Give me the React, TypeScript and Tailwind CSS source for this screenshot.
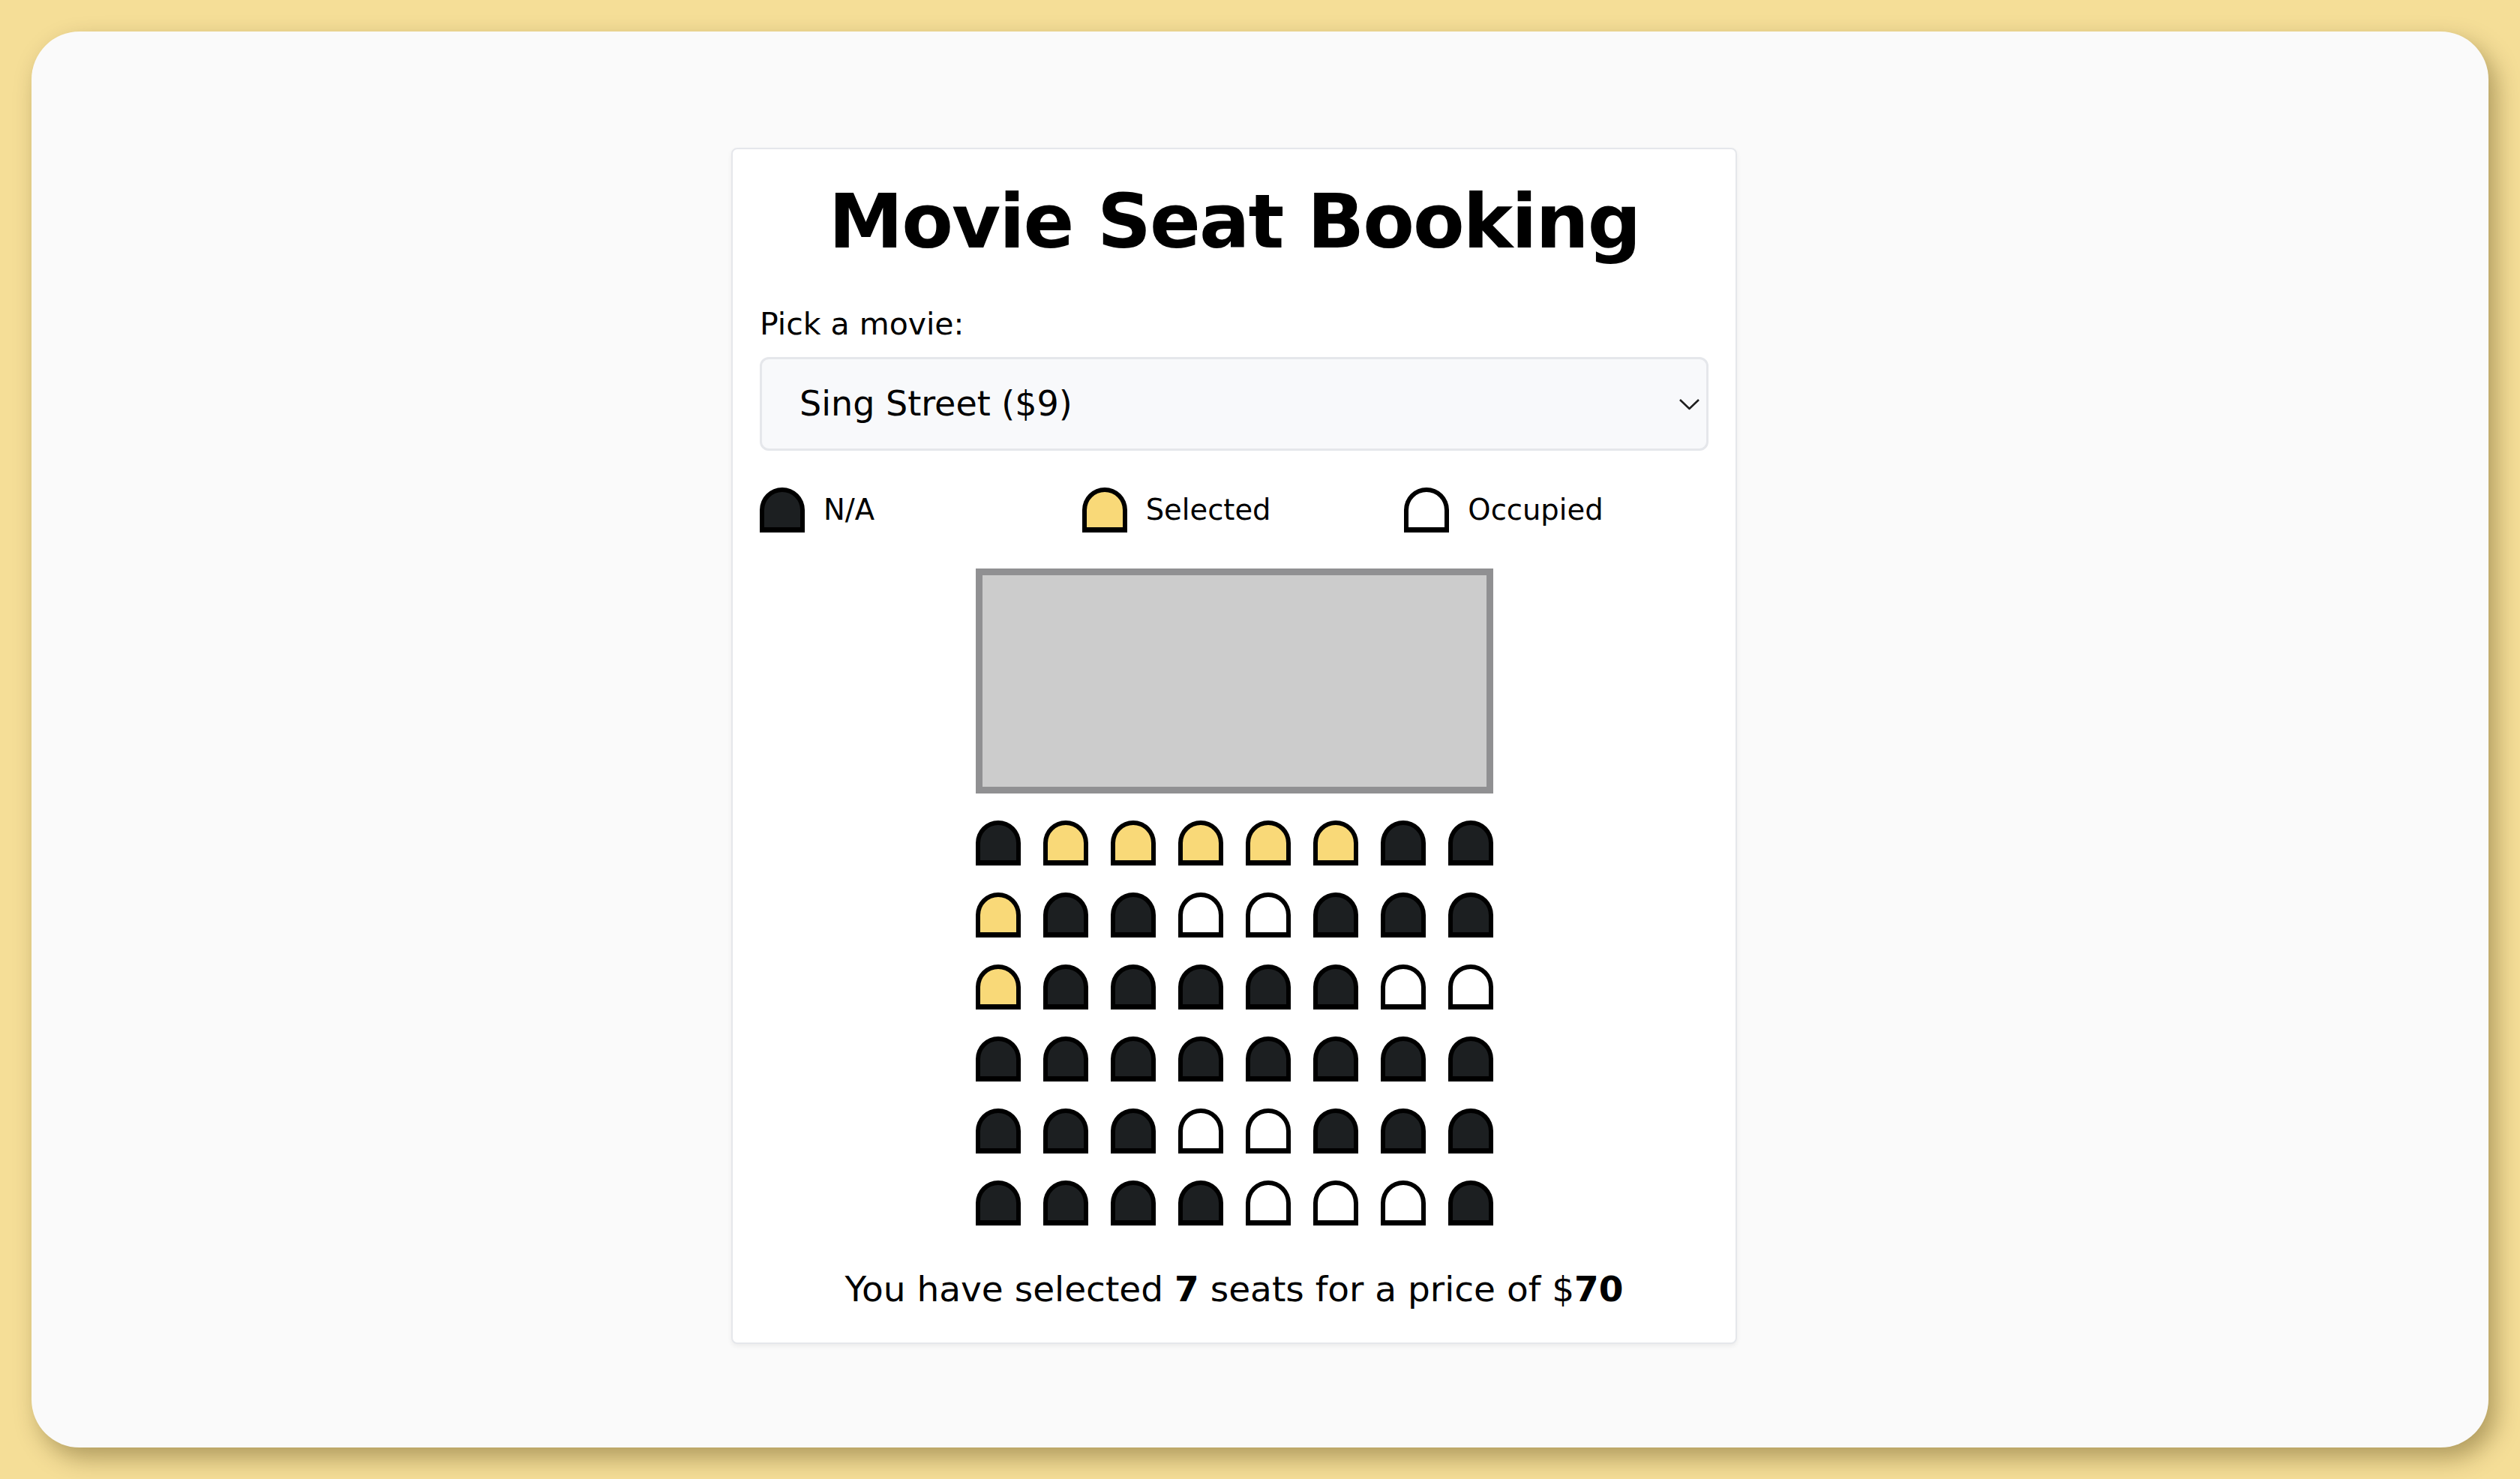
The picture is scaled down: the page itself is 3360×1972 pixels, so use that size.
import { useState } from "react";

// N = not available, S = selected, O = occupied
const seatMap = [
  "NSSSSSNN",
  "SNNOONNN",
  "SNNNNNOO",
  "NNNNNNNN",
  "NNNOONNN",
  "NNNNOOON",
];

const fills: Record<string, string> = {
  N: "bg-[#1c1f21]",
  S: "bg-[#f9d978]",
  O: "bg-white",
};

const legend = [
  { kind: "N", label: "N/A" },
  { kind: "S", label: "Selected" },
  { kind: "O", label: "Occupied" },
];

function Seat({ kind }: { kind: string }) {
  return (
    <div
      className={`h-[60px] w-[60px] rounded-t-[30px] border-[6px] border-b-[7px] border-black ${fills[kind]}`}
    />
  );
}

export default function App() {
  const [movie, setMovie] = useState("9");

  return (
    <div className="h-screen w-full bg-[#f5de97] p-[42px] font-['DejaVu_Sans',sans-serif] text-black">
      <div className="flex h-full justify-center rounded-[64px] bg-[#fafafa] pr-[69px] pt-[155px] shadow-[10px_14px_32px_rgba(60,45,0,0.38)]">
        <div className="h-fit w-[1341px] rounded-lg border-2 border-[#e5e7eb] bg-white px-[36px] pb-[48px] pt-[47px] shadow-[0_3px_6px_rgba(0,0,0,0.06)]">
          <h1 className="text-center text-[100px] font-bold leading-none tracking-[-0.02em]">
            Movie Seat Booking
          </h1>

          <label htmlFor="movie" className="mt-[66px] block text-[41px] leading-none">
            Pick a movie:
          </label>
          <div className="relative mt-[23px]">
            <select
              id="movie"
              value={movie}
              onChange={(e) => setMovie(e.target.value)}
              className="h-[125px] w-full appearance-none rounded-[12px] border-[3px] border-[#e5e7eb] bg-[#f8f9fb] pl-[50px] font-['DejaVu_Sans',sans-serif] text-[46px] text-black outline-none"
            >
              <option value="9">Sing Street ($9)</option>
              <option value="10">Whiplash ($10)</option>
              <option value="8">La La Land ($8)</option>
            </select>
            <svg
              className="pointer-events-none absolute right-[12px] top-1/2 -translate-y-1/2"
              width="27"
              height="15"
              viewBox="0 0 27 15"
              fill="none"
            >
              <path d="M1 1.5l12.5 12L26 1.5" stroke="#1f1f1f" strokeWidth="2.6" />
            </svg>
          </div>

          <div className="mt-[49px] grid grid-cols-3 gap-x-[24px]">
            {legend.map((item) => (
              <div key={item.label} className="flex items-center gap-[25px]">
                <Seat kind={item.kind} />
                <span className="text-[38.5px] leading-none">{item.label}</span>
              </div>
            ))}
          </div>

          <div className="mx-auto mt-[48px] w-[690px]">
            <div className="h-[300px] w-full border-[9px] border-[#909092] bg-[#cccccc]" />
            <div className="mt-[36px] grid grid-cols-8 gap-x-[30px] gap-y-[36px]">
              {seatMap.map((row, r) =>
                row.split("").map((kind, c) => <Seat key={`${r}-${c}`} kind={kind} />)
              )}
            </div>
          </div>

          <p className="mt-[61px] text-center text-[47px] leading-none">
            You have selected <span className="font-bold">7</span> seats for a price of $
            <span className="font-bold">70</span>
          </p>
        </div>
      </div>
    </div>
  );
}
